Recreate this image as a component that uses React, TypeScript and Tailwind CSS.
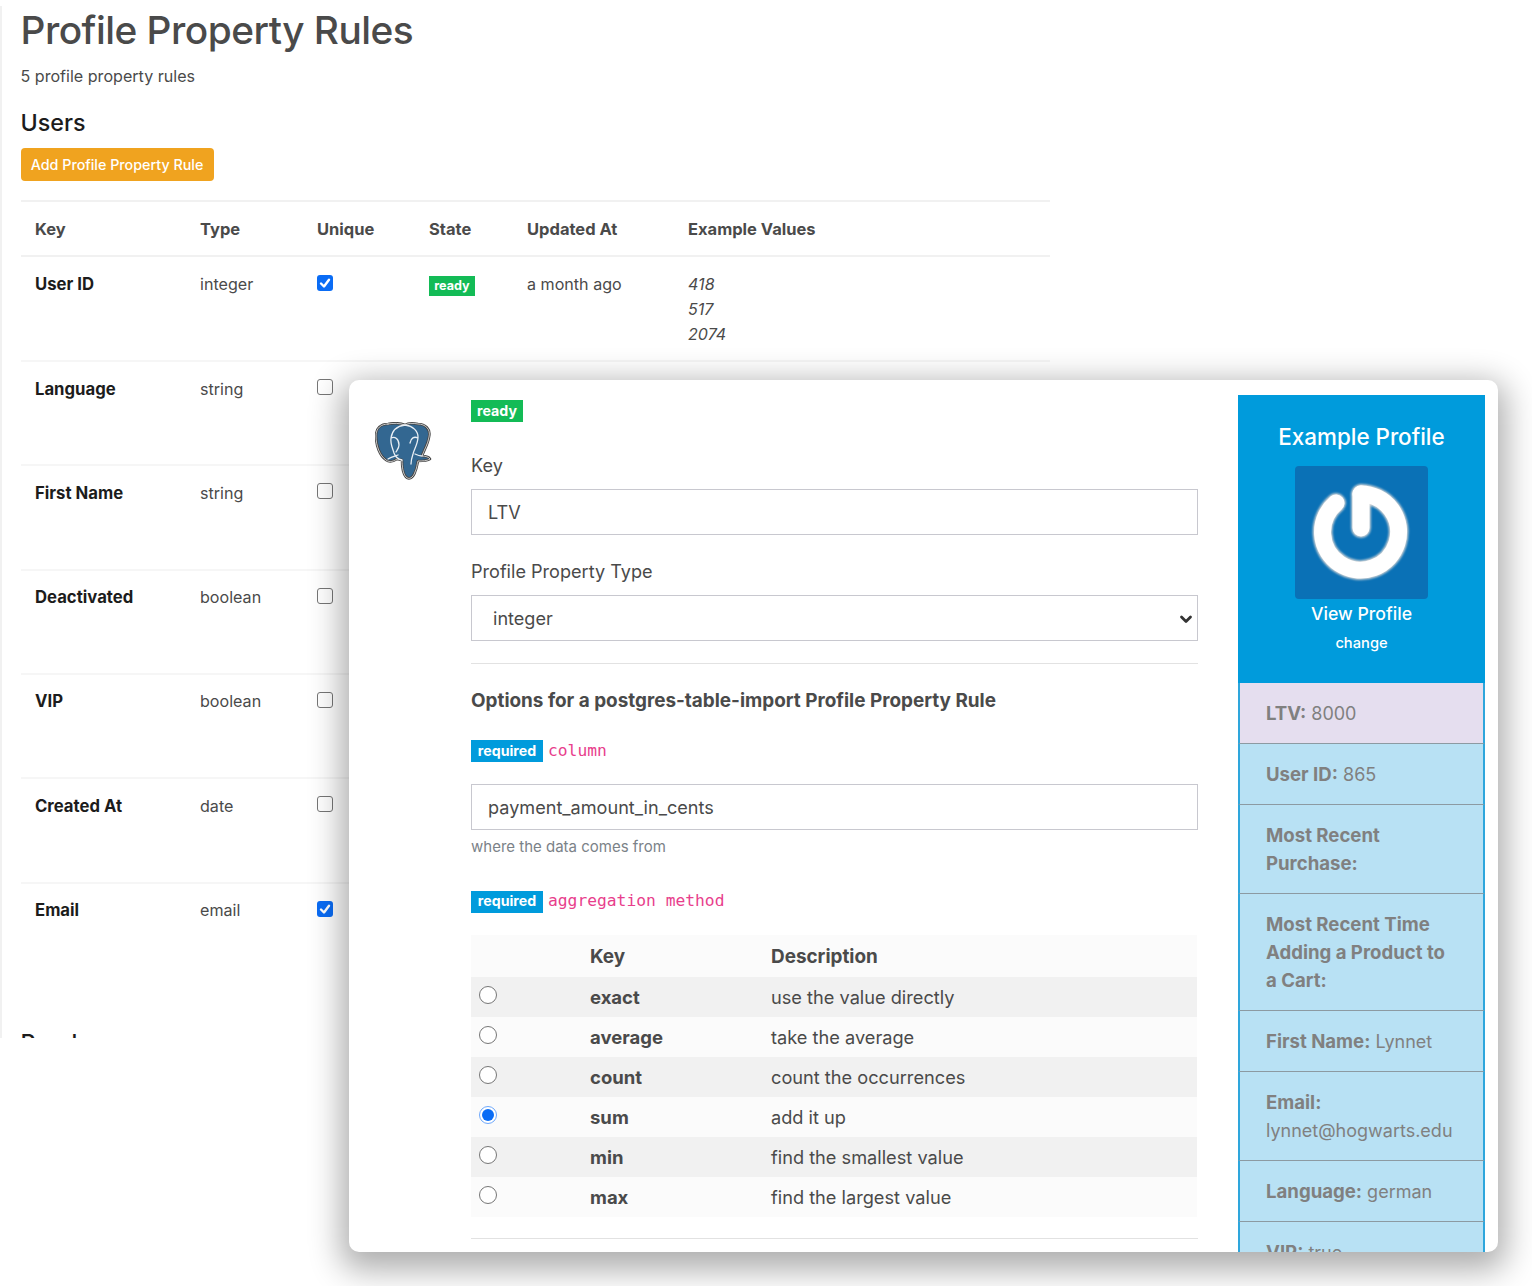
import React from "react";

const ink = "text-[#4a4a4a]";

function Badge({ children, color, className = "" }: { children: React.ReactNode; color: string; className?: string }) {
  return <span className={`inline-block font-bold text-white text-center ${color} ${className}`}>{children}</span>;
}

function Checkbox({ checked }: { checked?: boolean }) {
  return checked ? (
    <span className="flex h-[16px] w-[16px] items-center justify-center rounded-[3px] bg-[#0a6cf5]">
      <svg viewBox="0 0 16 16" className="h-[16px] w-[16px]" fill="none" stroke="white" strokeWidth="2.4" strokeLinecap="round" strokeLinejoin="round">
        <path d="M4 8.5 7 11.5 12 4.8" />
      </svg>
    </span>
  ) : (
    <span className="block h-[16px] w-[16px] rounded-[3px] border border-[#767676] bg-white" />
  );
}

function Radio({ checked }: { checked?: boolean }) {
  return checked ? (
    <span className="flex h-[18px] w-[18px] items-center justify-center rounded-full border border-[#6ea8fb] bg-white">
      <span className="block h-[12px] w-[12px] rounded-full bg-[#0a6cf5]" />
    </span>
  ) : (
    <span className="block h-[18px] w-[18px] rounded-full border border-[#767676] bg-white" />
  );
}

const rows = [
  { key: "User ID", type: "integer", unique: true, state: true, updated: "a month ago", ex: ["418", "517", "2074"], h: "h-[105px]", pt: "pt-[15px]", box: "pt-[18px]" },
  { key: "Language", type: "string", h: "h-[104px]", pt: "pt-[15px]", box: "pt-[17px]" },
  { key: "First Name", type: "string", h: "h-[105px]", pt: "pt-[15px]", box: "pt-[17px]" },
  { key: "Deactivated", type: "boolean", h: "h-[104px]", pt: "pt-[14px]", box: "pt-[17px]" },
  { key: "VIP", type: "boolean", h: "h-[104px]", pt: "pt-[14px]", box: "pt-[17px]" },
  { key: "Created At", type: "date", h: "h-[105px]", pt: "pt-[15px]", box: "pt-[17px]" },
  { key: "Email", type: "email", unique: true, h: "h-[104px]", pt: "pt-[14px]", box: "pt-[17px]" },
];

const methods = [
  ["exact", "use the value directly"],
  ["average", "take the average"],
  ["count", "count the occurrences"],
  ["sum", "add it up"],
  ["min", "find the smallest value"],
  ["max", "find the largest value"],
];

const outline =
  "M13 2C6 2 1 6 1 14C1 24 5 34 11 38C15 41 19 39 22 37L27 38C27 44 28 52 31 55C34 58 38 56 40 50C42 46 42 42 43 39C47 39 52 39 55 37C54 35 50 34 47 34C49 28 53 22 54 15C56 7 50 2 43 2C38 1 33 1 30 3C25 1 18 1 13 2Z";

function Elephant() {
  return (
    <svg viewBox="0 0 57 60" className="h-[60px] w-[57px]">
      <g strokeLinejoin="round" strokeLinecap="round" fill="none">
        <path d={outline} fill="#336791" stroke="#444" strokeWidth="2.600" />
        <path d={outline} stroke="#fff" strokeWidth="0.700" />
        <path
          d="M30 3C22 4 17 9 16 16C15 22 18 27 19 31C20 34 22 37 27 38M30 3C38 4 43 9 43 15C43 22 39 27 38 32C37 35 36 38 36 42M16 16C20 14 24 17 24 23C24 26 22 28 21 30M43 16C39 14 36 16 35 21M13 37C16 35 20 34 23 33M47 34C44 34 42 33 40 32"
          stroke="#e8eef4"
          strokeWidth="1.300"
        />
      </g>
    </svg>
  );
}

function Gauge() {
  return (
    <svg viewBox="0 0 133 133" className="h-[133px] w-[133px]">
      <defs>
        <filter id="soft" x="-20%" y="-20%" width="140%" height="140%">
          <feGaussianBlur stdDeviation="1.2" />
        </filter>
      </defs>
      <g fill="none" strokeLinecap="round" filter="url(#soft)" stroke="#d8d8d8" strokeWidth="19.500">
        <path d="M41 37A38 38 0 1 0 66 28" />
        <path d="M66 28V62" />
      </g>
      <g fill="none" strokeLinecap="round" stroke="#fff" strokeWidth="17">
        <path d="M41 37A38 38 0 1 0 66 28" />
        <path d="M66 28V62" />
      </g>
    </svg>
  );
}

const sideRows: { h: string; bg?: string; label: string; value?: string }[] = [
  { h: "h-[61px]", bg: "bg-[#e5deef]", label: "LTV", value: "8000" },
  { h: "h-[61px]", label: "User ID", value: "865" },
  { h: "h-[89px]", label: "Most Recent Purchase" },
  { h: "h-[117px]", label: "Most Recent Time Adding a Product to a Cart" },
  { h: "h-[61px]", label: "First Name", value: "Lynnet" },
  { h: "h-[89px]", label: "Email", value: "lynnet@hogwarts.edu" },
  { h: "h-[61px]", label: "Language", value: "german" },
  { h: "h-[61px]", label: "VIP", value: "true" },
];

export default function App() {
  return (
    <div className="relative h-[1286px] w-[1532px] overflow-hidden bg-white font-['Inter',sans-serif]">
      <div className="h-[1038px] overflow-hidden">
        <div className="h-[1035px] border-l-2 border-[#f1f1f1] pl-[18.500px]">
          <h1 className={`mt-[6px] text-[38.800px] font-medium leading-[48px] tracking-[-0.5px] ${ink}`}>Profile Property Rules</h1>
          <p className={`mt-[10px] text-[16.100px] leading-[24px] ${ink}`}>5 profile property rules</p>
          <h2 className="mt-[20px] text-[23.300px] font-medium leading-[30px] text-[#1c1c1c]">Users</h2>
          <button className="mt-[10px] block h-[33px] w-[193px] rounded-[4px] bg-[#f0a31f] text-[14.300px] font-medium text-white">Add Profile Property Rule</button>
          <table className="mt-[19px] w-[1029px] table-fixed border-collapse text-[16.100px]">
            <colgroup>
              <col className="w-[165px]" />
              <col className="w-[117px]" />
              <col className="w-[112px]" />
              <col className="w-[98px]" />
              <col className="w-[161px]" />
              <col />
            </colgroup>
            <thead>
              <tr className="h-[55px] border-y-2 border-[#f1f1f1] text-left">
                {["Key", "Type", "Unique", "State", "Updated At", "Example Values"].map((h) => (
                  <th key={h} className={`pl-[14.500px] pr-[14px] pt-[2px] text-[16.500px] font-bold ${ink}`}>{h}</th>
                ))}
              </tr>
            </thead>
            <tbody>
              {rows.map((r) => (
                <tr key={r.key} className={`${r.h} border-b-2 border-[#f6f6f6] align-top last:border-b-0`}>
                  <td className={`pl-[14.500px] pr-[14px] ${r.pt} text-[16.700px] font-bold leading-[25px] text-[#1c1c1c]`}>{r.key}</td>
                  <td className={`pl-[14.500px] pr-[14px] ${r.pt} leading-[25px] ${ink}`}>{r.type}</td>
                  <td className={`pl-[14px] pr-[14px] ${r.box}`}><Checkbox checked={r.unique} /></td>
                  <td className="pl-[14.500px] pr-[14px] pt-[15px]">
                    {r.state && <Badge color="bg-[#13bb56]" className="h-[20px] w-[46px] text-[12.600px] leading-[20px]">ready</Badge>}
                  </td>
                  <td className={`pl-[14.500px] pr-[14px] ${r.pt} leading-[25px] ${ink}`}>{r.updated}</td>
                  <td className={`pl-[14.500px] pr-[14px] ${r.pt} italic leading-[25px] ${ink}`}>
                    {r.ex?.map((e) => <div key={e}>{e}</div>)}
                  </td>
                </tr>
              ))}
            </tbody>
          </table>
          <h2 className="mt-[41px] text-[23.300px] font-medium leading-[30px] text-[#1c1c1c]">Purchases</h2>
        </div>
      </div>

      <div className="absolute left-[349px] top-[380px] flex h-[872px] w-[1149px] overflow-hidden rounded-[10px] bg-white shadow-[0_10px_32px_8px_rgba(0,0,0,0.32)]">
        <div className="w-[122px] shrink-0 pl-[26px] pt-[42px]">
          <Elephant />
        </div>
        <div className={`w-[727px] shrink-0 pt-[16px] text-[18.100px] ${ink}`}>
          <Badge color="bg-[#13bb56]" className="block h-[22px] w-[52px] text-[14.200px] leading-[22px]">ready</Badge>
          <label className="mt-[30px] block leading-[24px]">Key</label>
          <div className="mt-[12px] flex h-[46px] items-center border-[1.500px] border-[#c8c8cf] pl-[16px] pt-[1px]">LTV</div>
          <label className="mt-[24px] block leading-[24px]">Profile Property Type</label>
          <div className="mt-[12px] flex h-[46px] items-center justify-between border-[1.500px] border-[#c8c8cf] pl-[21px] pr-[3px] pt-[1px]">
            integer
            <svg viewBox="0 0 16 16" className="h-[16px] w-[16px]" fill="none" stroke="#333" strokeWidth="2.800" strokeLinecap="round" strokeLinejoin="round">
              <path d="M3.500 6 8 10.500 12.500 6" />
            </svg>
          </div>
          <hr className="mt-[22px] border-[#e2e2e2]" />
          <h3 className="mt-[24px] text-[18.900px] font-bold leading-[26px]">Options for a postgres-table-import Profile Property Rule</h3>
          <div className="mt-[26px] flex h-[22px] items-center gap-[5px]">
            <Badge color="bg-[#009bdc]" className="h-[22px] w-[72px] text-[14.200px] leading-[22px]">required</Badge>
            <code className="font-['DejaVu_Sans_Mono',monospace] text-[16.300px] text-[#e83e8c]">column</code>
          </div>
          <div className="mt-[22px] flex h-[46px] items-center border-[1.500px] border-[#c8c8cf] pl-[16px]">payment_amount_in_cents</div>
          <p className="mt-[7px] text-[15px] leading-[20px] text-[#7b8288]">where the data comes from</p>
          <div className="mt-[34px] flex h-[22px] items-center gap-[5px]">
            <Badge color="bg-[#009bdc]" className="h-[22px] w-[72px] text-[14.200px] leading-[20px]">required</Badge>
            <code className="-mt-[2px] font-['DejaVu_Sans_Mono',monospace] text-[16.300px] text-[#e83e8c]">aggregation method</code>
          </div>
          <table className="mt-[22px] w-[726px] table-fixed border-collapse">
            <colgroup>
              <col className="w-[105px]" />
              <col className="w-[181px]" />
              <col />
            </colgroup>
            <thead>
              <tr className="h-[42px] bg-[#fbfbfb] text-left">
                <th />
                <th className="px-[14px] pt-[2px] text-[18.900px] font-bold">Key</th>
                <th className="px-[14px] pt-[2px] text-[18.900px] font-bold">Description</th>
              </tr>
            </thead>
            <tbody>
              {methods.map(([k, d], i) => (
                <tr key={k} className={`h-[40px] ${i % 2 === 0 ? "bg-[#f1f1f1]" : "bg-[#fbfbfb]"}`}>
                  <td className="pb-[4px] pl-[8px]"><Radio checked={k === "sum"} /></td>
                  <td className="px-[14px] pt-[1px] text-[18.500px] font-bold">{k}</td>
                  <td className="px-[14px] pt-[1px] text-[18.200px]">{d}</td>
                </tr>
              ))}
            </tbody>
          </table>
          <hr className="mt-[21px] border-[#e2e2e2]" />
        </div>
        <div className="ml-[40px] mt-[15px] w-[247px] shrink-0 self-start">
          <div className="flex h-[288px] flex-col items-center bg-[#009bdc] pt-[26px] text-white">
            <div className="text-[22.400px] font-medium leading-[32px]">Example Profile</div>
            <div className="mt-[13px] rounded-[4px] bg-[#0a71b6]"><Gauge /></div>
            <div className="mt-[2px] text-[17.700px] font-medium leading-[26px]">View Profile</div>
            <div className="mt-[6px] text-[14.700px] font-medium leading-[20px]">change</div>
          </div>
          {sideRows.map((r) => (
            <div key={r.label} className={`${r.h} border-x-2 border-b border-x-[#2ea6dc] border-b-[#8c9aa2] last:border-b-0 ${r.bg ?? "bg-[#b8e1f4]"} pb-[10px] pl-[26px] pr-[27px] pt-[17px] text-[18px] leading-[28px] text-[#808080]`}>
              <span className="text-[18.600px] font-bold leading-none">{r.label}:</span>{r.value ? " " + r.value : ""}
            </div>
          ))}
        </div>
      </div>
    </div>
  );
}
